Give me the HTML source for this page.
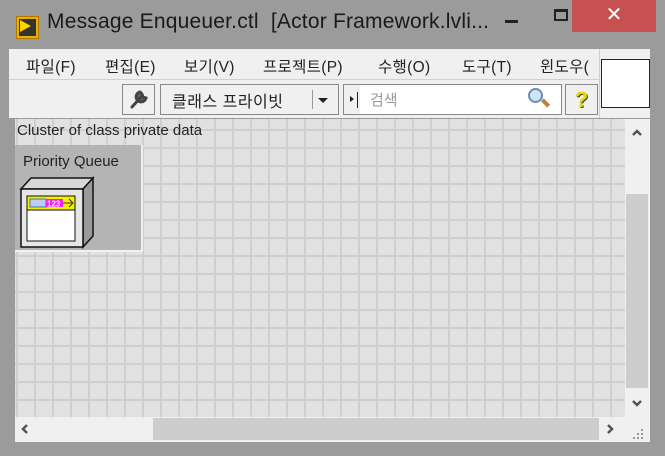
<!DOCTYPE html>
<html><head><meta charset="utf-8"><style>
*{margin:0;padding:0;box-sizing:border-box}
body{width:665px;height:456px;background:#9b9b9b;position:relative;overflow:hidden;font-family:"Liberation Sans","Noto Sans CJK KR",sans-serif}
.a{position:absolute}
.title{left:47px;top:10px;font-size:21px;color:#1a1a1a;white-space:nowrap;letter-spacing:0.2px}
.menu{left:9px;top:49px;width:590px;height:31px;background:#f0f0f0;border-bottom:1px solid #d0d0d0}
.menu span{position:absolute;top:6px;font-size:15.5px;color:#222;letter-spacing:0.3px}
.tb{left:9px;top:80px;width:590px;height:38px;background:#f0f0f0}
.canvas{left:15px;top:119px;width:610px;height:298px;background-color:#e1e1e1;
background-image:linear-gradient(#cfcfcf 2px,transparent 2px),linear-gradient(90deg,#cfcfcf 2px,transparent 2px);
background-size:18px 18px;background-position:1px 10px}
</style></head><body>
<div class="a" style="left:16px;top:16px;width:23px;height:23px;background:#e8b000;border:1px solid #b07800"></div>
<div class="a" style="left:19px;top:19px;width:17px;height:17px;background:#333"></div>
<div class="a" style="left:20px;top:20px;width:0;height:0;border-left:11px solid #ffd000;border-top:6px solid transparent;border-bottom:6px solid transparent"></div>
<div class="a title">Message Enqueuer.ctl&nbsp; [Actor Framework.lvli...</div>
<div class="a" style="left:505px;top:20px;width:13px;height:3px;background:#222"></div>
<div class="a" style="left:554px;top:9px;width:14px;height:12px;border:2px solid #222;border-top-width:3px"></div>
<div class="a" style="left:572px;top:0;width:84px;height:32px;background:#c75050;color:#fff;font-size:20px;text-align:center;line-height:30px">✕</div>

<div class="a menu">
<span style="left:17px">파일(F)</span><span style="left:96px">편집(E)</span><span style="left:175px">보기(V)</span><span style="left:254px">프로젝트(P)</span><span style="left:369px">수행(O)</span><span style="left:453px">도구(T)</span><span style="left:531px">윈도우(</span>
</div>
<div class="a" style="left:599px;top:49px;width:51px;height:69px;background:#f0f0f0;border-left:1px solid #d0d0d0"></div>
<div class="a" style="left:601px;top:59px;width:49px;height:49px;background:#fff;border:1px solid #222"></div>
<div class="a tb"></div>
<div class="a" style="left:122px;top:84px;width:33px;height:31px;border:1px solid #888;background:#f0f0f0"></div>
<svg class="a" style="left:128px;top:88px" width="22" height="22"><path d="M4,19 L13,9 M12,4 a5,5 0 1,0 6,6 l-3,-1 -1,-3 z" stroke="#444" stroke-width="3" fill="#666" stroke-linecap="round"/></svg>
<div class="a" style="left:160px;top:84px;width:179px;height:31px;border:1px solid #888;background:#f0f0f0"></div>
<div class="a" style="left:172px;top:88px;font-size:16px;color:#222;letter-spacing:0.5px">클래스 프라이빗</div>
<div class="a" style="left:312px;top:90px;width:1px;height:19px;background:#999"></div>
<div class="a" style="left:318px;top:98px;border-left:5px solid transparent;border-right:5px solid transparent;border-top:5px solid #222"></div>
<div class="a" style="left:343px;top:84px;width:219px;height:31px;border:1px solid #888;background:#fff"></div>
<div class="a" style="left:344px;top:85px;width:16px;height:29px;background:#f0f0f0"></div>
<div class="a" style="left:350px;top:96px;border-top:3px solid transparent;border-bottom:3px solid transparent;border-left:4px solid #222"></div>
<div class="a" style="left:357px;top:92px;width:1px;height:16px;background:#222"></div>
<div class="a" style="left:370px;top:89px;font-size:15px;color:#999">검색</div>
<div class="a" style="left:528px;top:88px;width:15px;height:15px;border:2px solid #6c8db0;border-radius:50%;background:#cfe4f5"></div>
<div class="a" style="left:541px;top:101px;width:9px;height:4px;background:#c08040;transform:rotate(45deg)"></div>
<div class="a" style="left:565px;top:84px;width:33px;height:31px;border:1px solid #888;background:#f0f0f0;font-size:22px;font-weight:bold;color:#e8d800;text-align:center;line-height:30px;text-shadow:1px 1px 0 #444">?</div>

<div class="a canvas"></div>
<div class="a" style="left:17px;top:122px;font-size:15px;color:#222">Cluster of class private data</div>
<div class="a" style="left:15px;top:145px;width:128px;height:107px;background:#b4b4b4;border-right:2px solid #f0f0f0;border-bottom:2px solid #f0f0f0"></div>
<div class="a" style="left:23px;top:153px;font-size:15px;color:#222">Priority Queue</div>
<svg class="a" style="left:19px;top:176px" width="76" height="74">
<polygon points="2,13 12,2 74,2 64,13" fill="#d8d8d8" stroke="#111" stroke-width="1.5"/>
<polygon points="64,13 74,2 74,60 64,71" fill="#9a9a9a" stroke="#111" stroke-width="1.5"/>
<rect x="2" y="13" width="62" height="58" fill="#e6e6e6" stroke="#111" stroke-width="1.5"/>
<rect x="8" y="20" width="48" height="45" fill="#fff" stroke="#111"/>
<rect x="8" y="20" width="48" height="14" fill="#f5f000" stroke="#111"/>
<rect x="11" y="23" width="16" height="8" fill="#b8d0f0" stroke="#5070a0"/>
<rect x="27" y="23" width="17" height="8" fill="#f020f0"/>
<text x="28" y="30.5" font-size="8" font-weight="bold" fill="#fff" font-family="Liberation Sans">123</text>
<path d="M44,27 H53 M50,23 L54,27 L50,31" stroke="#333" fill="none"/>
</svg>

<div class="a" style="left:625px;top:119px;width:25px;height:298px;background:#f0f0f0"></div>
<div class="a" style="left:626px;top:194px;width:22px;height:194px;background:#cdcdcd"></div>
<svg class="a" style="left:625px;top:119px" width="25" height="298">
<path d="M8,16 L12,12 L16,16" stroke="#555" stroke-width="2.5" fill="none"/>
<path d="M8,282 L12,286 L16,282" stroke="#555" stroke-width="2.5" fill="none"/>
</svg>
<div class="a" style="left:15px;top:417px;width:635px;height:25px;background:#f0f0f0"></div>
<div class="a" style="left:153px;top:418px;width:446px;height:22px;background:#cdcdcd"></div>
<svg class="a" style="left:15px;top:417px" width="635" height="25">
<path d="M12,8 L8,12 L12,16" stroke="#555" stroke-width="2.5" fill="none"/>
<path d="M593,8 L597,12 L593,16" stroke="#555" stroke-width="2.5" fill="none"/>
<g fill="#999"><rect x="626" y="20" width="2" height="2"/><rect x="622" y="20" width="2" height="2"/><rect x="618" y="20" width="2" height="2"/><rect x="626" y="16" width="2" height="2"/><rect x="622" y="16" width="2" height="2"/><rect x="626" y="12" width="2" height="2"/></g>
</svg>
</body></html>
